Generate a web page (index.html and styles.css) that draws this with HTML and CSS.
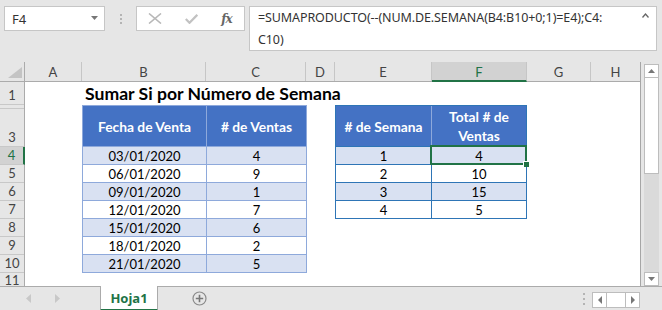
FILE: index.html
```html
<!DOCTYPE html>
<html lang="es">
<head>
<meta charset="utf-8">
<link rel="stylesheet" href="styles.css">
</head>
<body>
<div class="fbar">
  <div class="namebox"><span>F4</span><svg class="nb-caret" width="8" height="5" viewBox="0 0 8 5"><polygon points="0,0 7,0 3.5,4" fill="#777"/></svg></div>
  <div class="vdots"><i></i><i></i><i></i></div>
  <div class="fbtns">
    <svg width="14" height="11" viewBox="0 0 14 11"><path d="M1 0.5 L13 10.5 M13 0.5 L1 10.5" stroke="#b8b8b8" stroke-width="1.6" fill="none"/></svg>
    <svg width="13" height="10" viewBox="0 0 13 10"><path d="M0.8 5 L4.5 8.8 L12.3 0.8" stroke="#c2c2c2" stroke-width="2.2" fill="none"/></svg>
    <span class="fx">fx</span>
  </div>
  <div class="formula">
    <div class="ftext">=SUMAPRODUCTO(--(NUM.DE.SEMANA(B4:B10+0;1)=E4);C4:<br>C10)</div>
    <svg class="f-caret" width="7" height="5" viewBox="0 0 7 5"><path d="M0.5 4.5 L3.5 1 L6.5 4.5" stroke="#666" stroke-width="1.3" fill="none"/></svg>
  </div>
</div>

<div class="main">
  <div class="sheet">
    <div class="corner"><svg width="25" height="20" viewBox="0 0 25 20"><polygon points="22,5 22,16 8,16" fill="#c4c4c4"/></svg></div>
    <div class="colhdr">
      <div class="ch">A</div><div class="ch">B</div><div class="ch">C</div><div class="ch">D</div>
      <div class="ch">E</div><div class="ch ch-sel">F</div><div class="ch">G</div><div class="ch">H</div>
    </div>
    <div class="rowhdr">
      <div class="rh">1</div><div class="rh"></div><div class="rh">3</div>
      <div class="rh rh-sel">4</div><div class="rh">5</div><div class="rh">6</div><div class="rh">7</div>
      <div class="rh">8</div><div class="rh">9</div><div class="rh">10</div><div class="rh rh-last">11</div>
    </div>
    <div class="cells">
      <div class="title">Sumar Si por Número de Semana</div>

      <div class="tbl tbl1">
        <div class="th">Fecha de Venta</div><div class="th">&#35; de Ventas</div>
        <div class="td band">03/01/2020</div><div class="td band">4</div>
        <div class="td">06/01/2020</div><div class="td">9</div>
        <div class="td band">09/01/2020</div><div class="td band">1</div>
        <div class="td">12/01/2020</div><div class="td">7</div>
        <div class="td band">15/01/2020</div><div class="td band">6</div>
        <div class="td">18/01/2020</div><div class="td">2</div>
        <div class="td band">21/01/2020</div><div class="td band">5</div>
      </div>

      <div class="tbl tbl2">
        <div class="th"># de Semana</div><div class="th">Total # de<br>Ventas</div>
        <div class="td band">1</div><div class="td band active">4<span class="selbox"><span class="handle"></span></span></div>
        <div class="td">2</div><div class="td">10</div>
        <div class="td band">3</div><div class="td band">15</div>
        <div class="td">4</div><div class="td">5</div>
      </div>
    </div>
  </div>
  <div class="vscroll">
    <div class="vs-btn"><svg width="7" height="4" viewBox="0 0 7 4"><polygon points="0,4 7,4 3.5,0" fill="#777"/></svg></div>
    <div class="vs-thumb"></div>
    <div class="vs-track"></div>
    <div class="vs-btn vs-down"><svg width="7" height="4" viewBox="0 0 7 4"><polygon points="0,0 7,0 3.5,4" fill="#777"/></svg></div>
  </div>
</div>

<div class="tabbar">
  <div class="tabnav">
    <svg width="5" height="9" viewBox="0 0 5 9"><polygon points="5,0 5,9 0,4.5" fill="#c8c8c8"/></svg>
    <svg width="5" height="9" viewBox="0 0 5 9"><polygon points="0,0 0,9 5,4.5" fill="#c8c8c8"/></svg>
  </div>
  <div class="tab">Hoja1</div>
  <div class="addsheet"><svg width="15" height="15" viewBox="0 0 15 15"><circle cx="7.5" cy="7.5" r="6.5" fill="none" stroke="#8a8a8a" stroke-width="1.2"/><path d="M7.5 3.8 V11.2 M3.8 7.5 H11.2" stroke="#777" stroke-width="1.6"/></svg></div>
  <div class="spacer"></div>
  <div class="hdots"><i></i><i></i><i></i></div>
  <div class="hnav">
    <div class="hn-btn"><svg width="4" height="8" viewBox="0 0 4 8"><polygon points="4,0 4,8 0,4" fill="#777"/></svg></div>
    <div class="hn-mid"></div>
    <div class="hn-btn"><svg width="4" height="8" viewBox="0 0 4 8"><polygon points="0,0 0,8 4,4" fill="#777"/></svg></div>
  </div>
</div>
</body>
</html>
```

FILE: styles.css
```css
* { box-sizing: border-box; margin: 0; padding: 0; }

body {
  width: 662px;
  height: 310px;
  overflow: hidden;
  background: #e6e6e6;
  font-family: "Noto Sans", "Open Sans", sans-serif;
  color: #222;
}

/* formula bar */
.fbar {
  display: flex;
  align-items: flex-start;
  height: 62px;
  padding: 6px 0 0 4px;
}
.namebox {
  width: 101px;
  height: 25px;
  background: #fff;
  border: 1px solid #c6c6c6;
  display: flex;
  align-items: center;
  justify-content: space-between;
  padding: 0 5px 0 7px;
  font-size: 13px;
  color: #333;
}
.vdots {
  width: 31px;
  display: flex;
  flex-direction: column;
  align-items: center;
  gap: 2px;
  padding-top: 8px;
}
.vdots i, .hdots i {
  display: block;
  width: 2px;
  height: 2px;
  background: #b4b4b4;
}
.fbtns {
  width: 109px;
  height: 25px;
  background: #fff;
  border: 1px solid #c6c6c6;
  display: grid;
  grid-template-columns: 36px 36px 35px;
  align-items: center;
  justify-items: center;
}
.fx {
  font-family: "DejaVu Serif", serif;
  font-style: italic;
  font-weight: bold;
  font-size: 12px;
  color: #666;
  letter-spacing: -1px;
}
.formula {
  margin-left: 4px;
  width: 408px;
  height: 45px;
  background: #fff;
  border: 1px solid #c6c6c6;
  display: flex;
  padding-left: 8px;
}
.ftext {
  flex: 1;
  font-size: 12.5px;
  letter-spacing: -0.1px;
  line-height: 22px;
  color: #333;
}
.f-caret {
  margin: 6px 7px 0 0;
}

/* main sheet */
.main {
  display: flex;
  height: 224px;
}
.sheet {
  width: 641px;
  display: grid;
  grid-template-columns: 25px 615px;
  grid-template-rows: 20px 204px;
  background: #fff;
  border-right: 1px solid #a6a6a6;
}
.corner {
  background: #e6e6e6;
  border-right: 1px solid #ababab;
  border-bottom: 1px solid #ababab;
}
.corner svg { display: block; }

.colhdr, .cells {
  display: grid;
  grid-template-columns: 57px 124px 100px 29px 97px 95px 64px 49px;
}
.colhdr {
  background: #e6e6e6;
  border-bottom: 1px solid #ababab;
}
.ch {
  border-right: 1px solid #c6c6c6;
  display: flex;
  align-items: center;
  justify-content: center;
  font-family: "Lato", sans-serif;
  font-size: 13px;
  color: #444;
}
.ch:last-child { border-right: none; }
.ch-sel {
  background: #d2d2d2;
  color: #217346;
  border-bottom: 2px solid #217346;
  margin-bottom: -1px;
  padding-top: 1px;
}

.rowhdr, .cells {
  grid-template-rows: 23px 4px 38px repeat(7, 18px) 13px;
}
.rowhdr {
  display: grid;
  background: #e6e6e6;
  border-right: 1px solid #ababab;
}
.rh {
  border-bottom: 1px solid #c8c8c8;
  display: flex;
  align-items: flex-end;
  justify-content: center;
  font-family: "Lato", sans-serif;
  font-size: 13px;
  line-height: 17px;
  color: #444;
}
.rh-last {
  border-bottom: none;
  align-items: flex-start;
  line-height: 13px;
  padding-top: 1px;
}
.rh-sel {
  background: #d2d2d2;
  color: #217346;
  border-right: 2px solid #217346;
  margin-right: -1px;
}

.cells {
  font-family: "Lato", sans-serif;
  color: #000;
}
.title {
  grid-column: 2 / 6;
  grid-row: 1;
  padding-left: 3px;
  font-size: 17.6px;
  font-weight: bold;
  line-height: 22px;
  align-self: end;
  white-space: nowrap;
}

.tbl {
  display: grid;
  align-self: start;
  justify-self: start;
  font-size: 13px;
}
.tbl1 {
  grid-column: 2 / 4;
  grid-row: 2 / 11;
  grid-template-columns: 124px 100px;
  grid-template-rows: 41px repeat(7, 18px);
  border-left: 1px solid #8ea9db;
  border-top: 1px solid #8ea9db;
  --line: #8ea9db;
}
.tbl2 {
  grid-column: 5 / 7;
  grid-row: 2 / 7;
  grid-template-columns: 96px 95px;
  grid-template-rows: 41px repeat(4, 18px);
  border-left: 1px solid #2e75b6;
  border-top: 1px solid #2e75b6;
  --line: #2e75b6;
}
.th, .td {
  border-right: 1px solid var(--line);
  border-bottom: 1px solid var(--line);
  display: flex;
  align-items: center;
  justify-content: center;
  text-align: center;
}
.th {
  background: #4472c4;
  color: #fff;
  font-weight: bold;
  font-size: 13.8px;
  line-height: 19px;
}
.tbl2 .th:first-child { border-right-color: #8ea9db; }
.td {
  line-height: 17px;
  padding-top: 1px;
}
.band { background: #d9e1f2; }

.active { position: relative; }
.selbox {
  position: absolute;
  left: -2px;
  top: -2px;
  right: -1px;
  bottom: -1px;
  border: 2px solid #217346;
}
.handle {
  position: absolute;
  right: -4px;
  bottom: -4px;
  width: 6px;
  height: 6px;
  background: #217346;
  border: 1px solid #fff;
  border-right: none;
  border-bottom: none;
}

/* vertical scrollbar */
.vscroll {
  width: 21px;
  padding: 2px 3px 0 3px;
  display: flex;
  flex-direction: column;
}
.vs-btn {
  height: 14px;
  background: #fff;
  border: 1px solid #bdbdbd;
  display: flex;
  align-items: center;
  justify-content: center;
}
.vs-thumb {
  height: 96px;
  background: #fff;
  border: 1px solid #bdbdbd;
  border-top: none;
}
.vs-track {
  flex: 1;
  background: #dadada;
}

/* sheet tabs */
.tabbar {
  display: flex;
  height: 24px;
  border-top: 1px solid #ababab;
}
.tabnav {
  width: 100px;
  display: flex;
  align-items: center;
  gap: 24px;
  padding-left: 26px;
}
.tab {
  width: 58px;
  margin-top: -1px;
  height: 25px;
  background: #fff;
  border-left: 1px solid #ababab;
  border-right: 1px solid #ababab;
  border-bottom: 2px solid #217346;
  display: flex;
  align-items: center;
  justify-content: center;
  font-family: "Noto Sans", sans-serif;
  font-weight: bold;
  font-size: 13px;
  color: #217346;
}
.addsheet {
  margin-left: 34px;
  display: flex;
  align-items: center;
}
.spacer { flex: 1; }
.hdots {
  width: 16px;
  display: flex;
  flex-direction: column;
  align-items: center;
  gap: 3px;
  padding-top: 6px;
}
.hnav {
  margin-top: 5px;
  height: 16px;
  display: flex;
  margin-right: 22px;
}
.hn-btn {
  width: 15px;
  background: #fff;
  border: 1px solid #bdbdbd;
  display: flex;
  align-items: center;
  justify-content: center;
}
.hn-mid {
  width: 18px;
  background: #fff;
  border-top: 1px solid #bdbdbd;
  border-bottom: 1px solid #bdbdbd;
}
```
